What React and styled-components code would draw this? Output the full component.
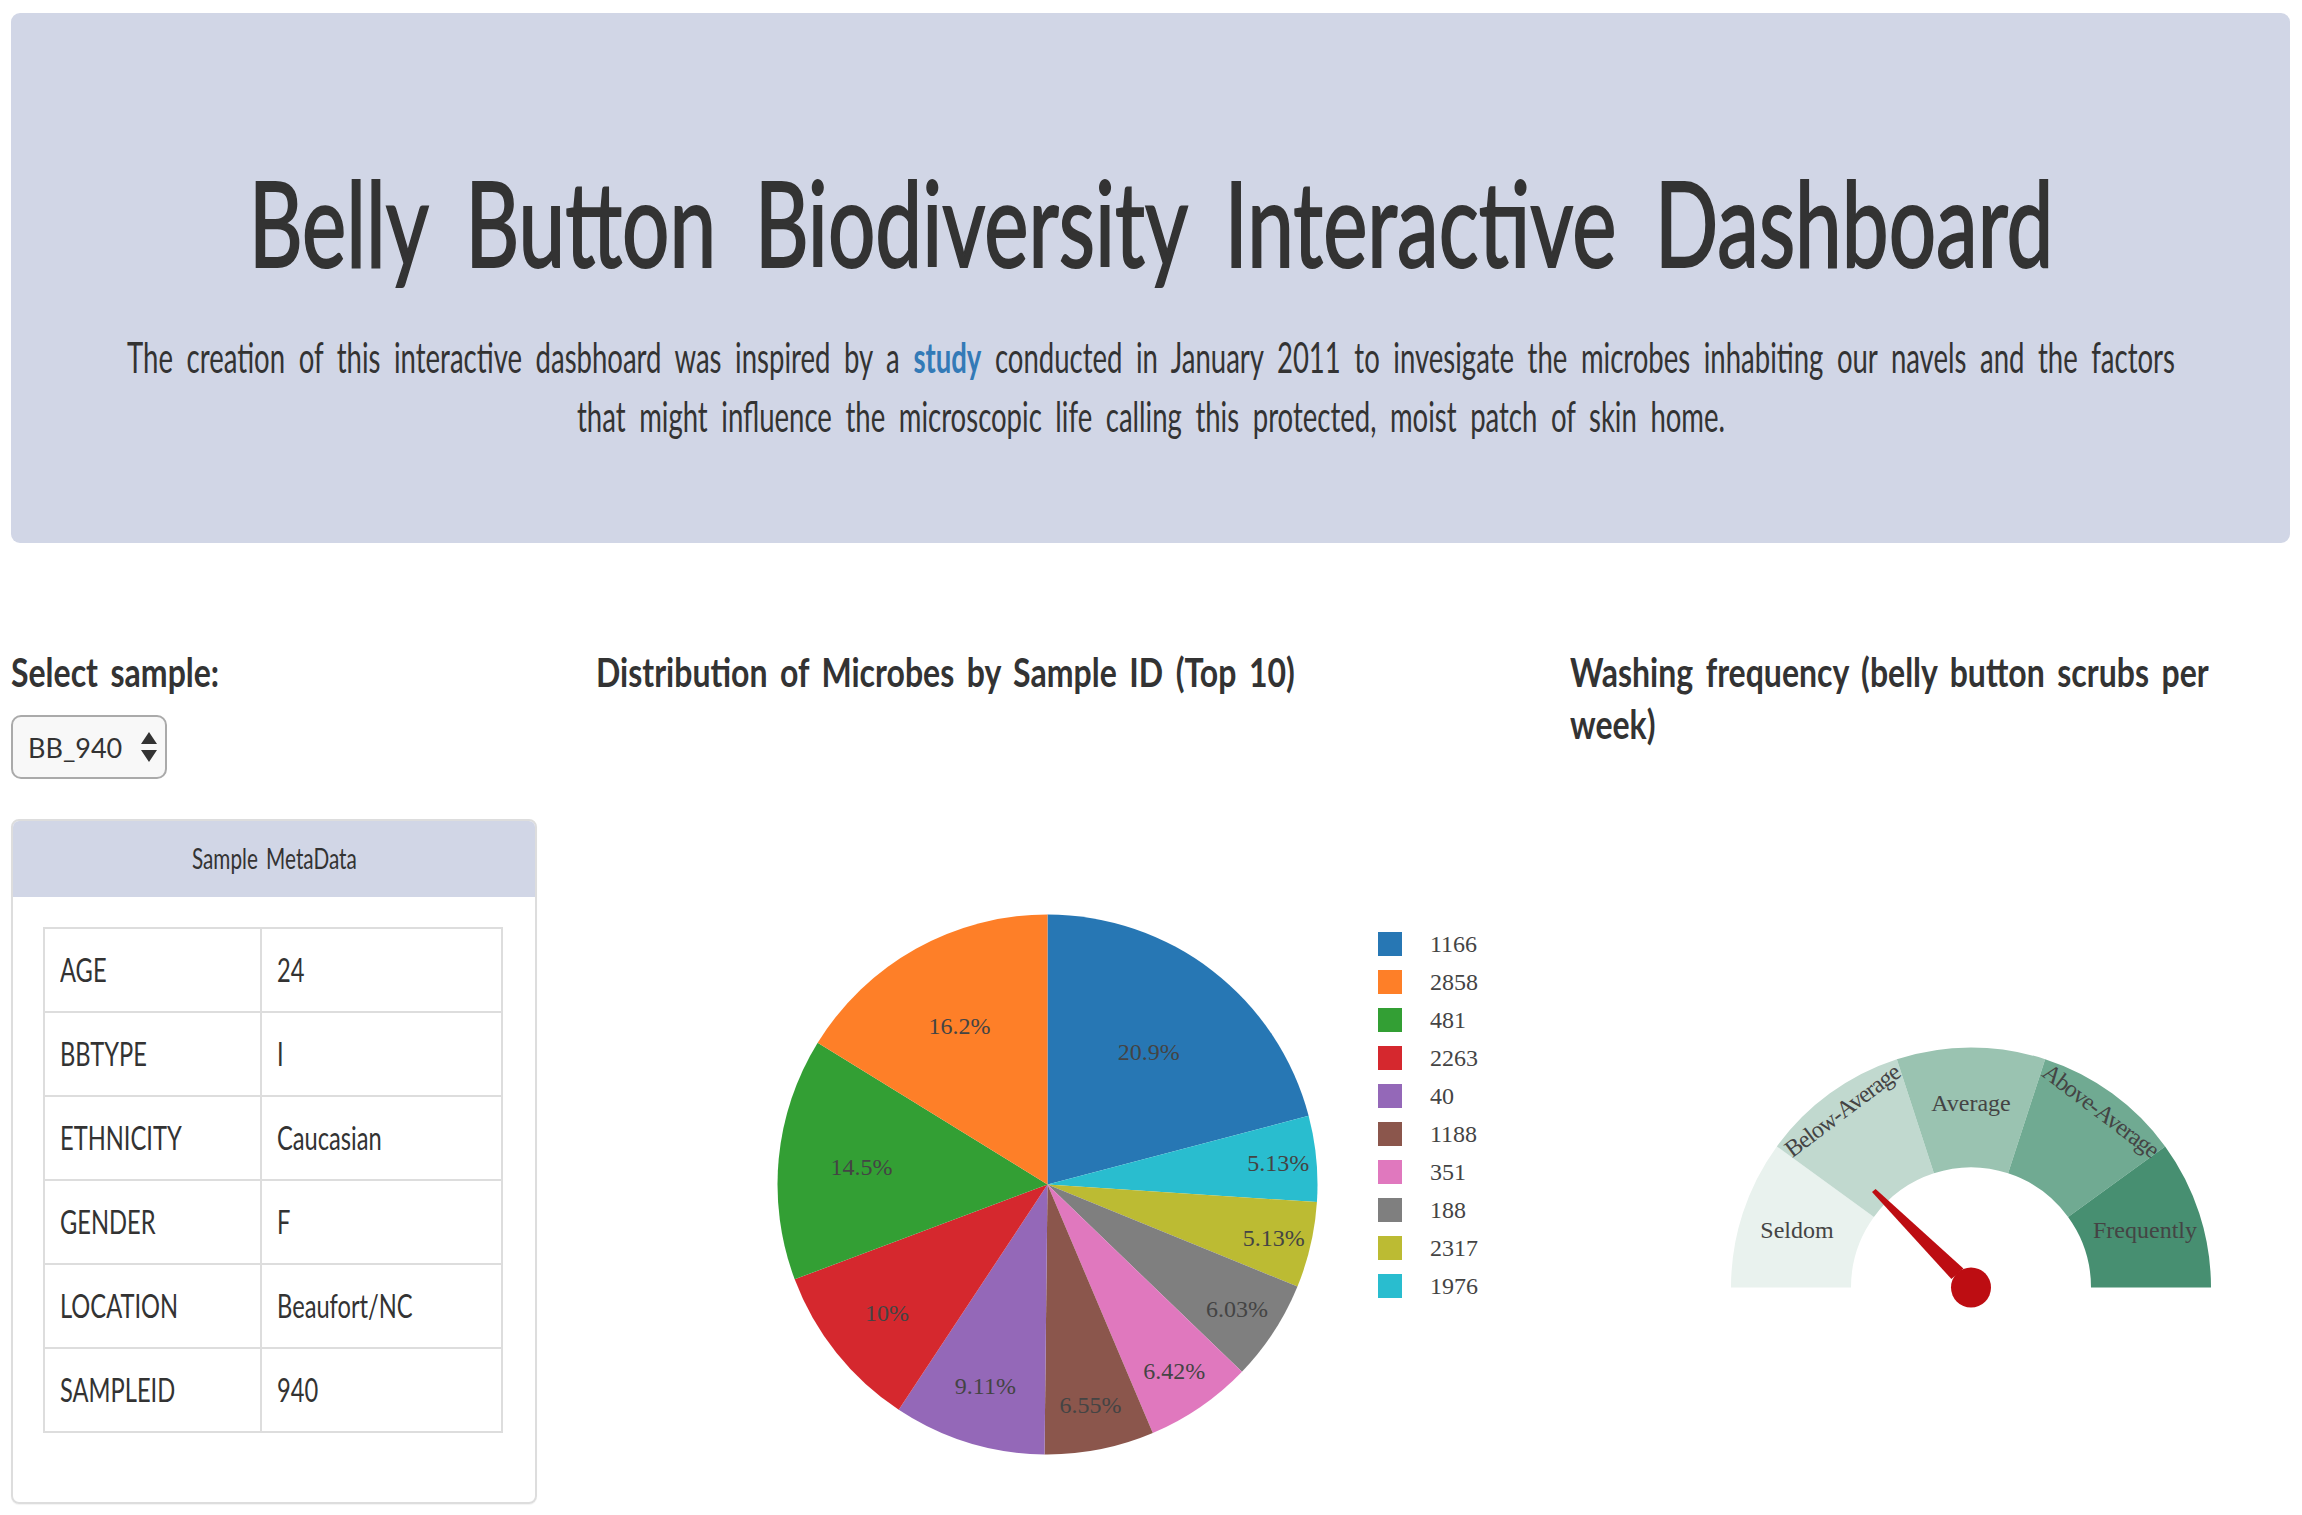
import React from 'react';
import styled, { createGlobalStyle } from 'styled-components';

const GlobalStyle = createGlobalStyle`
  html, body {
    margin: 0;
    background: #fff;
  }
  body {
    font-family: Lato, "Liberation Sans", sans-serif;
    color: #333;
  }
`;

const Page = styled.div`
  width: 2302px;
  height: 1515px;
  overflow: hidden;
  box-sizing: border-box;
  padding: 13px 12px 0 11px;
`;

const Jumbotron = styled.header`
  height: 530px;
  box-sizing: border-box;
  padding-top: 144px;
  background: #d1d6e6;
  border-radius: 9px;
  overflow: hidden;
`;

// the reference uses a tall, narrow hand-written face: squeeze a stock font to the same proportions
const Title = styled.h1`
  width: max-content;
  margin: 0 0 0 50%;
  font-size: 118px;
  font-weight: 400;
  line-height: 130px;
  word-spacing: 24px;
  white-space: nowrap;
  color: #333;
  -webkit-text-stroke: 2px #333;
  transform: translateX(-50%) scaleX(0.709);
`;

const Lead = styled.p`
  width: max-content;
  margin: 41px 0 0 50%;
  font-size: 42px;
  line-height: 59px;
  text-align: center;
  word-spacing: 10px;
  white-space: nowrap;
  color: #333;
  transform: translateX(-50%) scaleX(0.655);
`;

const StudyLink = styled.a`
  color: #337ab7;
  font-weight: 700;
  text-decoration: none;
`;

const Columns = styled.main`
  display: grid;
  grid-template-columns: 585px 974px 720px;
  margin-top: 103px;
`;

const Column = styled.section`
  min-width: 0;
`;

const SideTitle = styled.h3`
  width: max-content;
  margin: 0;
  font-size: 40px;
  font-weight: 700;
  line-height: 52px;
  word-spacing: 6px;
  color: #333;
  transform: scaleX(0.8);
  transform-origin: left center;
`;

const ChartTitle = styled(SideTitle)`
  min-height: 104px;
`;

const SelectWrap = styled.div`
  position: relative;
  width: 156px;
  height: 64px;
  margin-top: 17px;
`;

const SampleSelect = styled.select`
  appearance: none;
  width: 100%;
  height: 100%;
  box-sizing: border-box;
  padding: 0 0 0 15px;
  border: 2px solid #aaa;
  border-radius: 10px;
  background: #f8f8f8;
  font: 400 27px Lato, "Liberation Sans", sans-serif;
  color: #333;
`;

const SelectArrows = styled.svg`
  position: absolute;
  top: 16px;
  right: 10px;
  width: 16px;
  height: 32px;
  pointer-events: none;
`;

const Panel = styled.div`
  width: 526px;
  height: 685px;
  box-sizing: border-box;
  margin-top: 40px;
  border: 2px solid #ddd;
  border-radius: 8px;
  box-shadow: 0 1px 1px rgba(0, 0, 0, 0.05);
  overflow: hidden;
`;

const PanelHeading = styled.div`
  height: 76px;
  background: #d1d6e6;
  line-height: 74px;
  text-align: center;
`;

const HeadingText = styled.span`
  display: inline-block;
  font-size: 28px;
  word-spacing: 4px;
  color: #333;
  transform: scaleX(0.74);
`;

const PanelBody = styled.div`
  padding: 30px 30px;
`;

const MetaTable = styled.table`
  width: 460px;
  border-collapse: collapse;
  table-layout: fixed;
`;

const MetaRow = styled.tr`
  height: 84px;
`;

const MetaCell = styled.td`
  box-sizing: border-box;
  padding: 0 0 2px 15px;
  border: 2px solid #ddd;

  &:first-child {
    width: 217px;
  }
`;

const CellText = styled.span`
  display: inline-block;
  font-size: 32px;
  white-space: nowrap;
  color: #333;
  transform: scaleX(0.74);
  transform-origin: left center;
`;

const ChartCanvas = styled.svg`
  display: block;
  margin-top: 130px;
  font-family: "Liberation Serif", "Times New Roman", serif;
`;

const ChartLabel = styled.text`
  font-size: 24px;
  fill: #444;
  text-anchor: ${(props) => props.$anchor || 'middle'};
  letter-spacing: ${(props) => props.$tracking || 0}px;
`;

const PIE = { cx: 451.5, cy: 304.5, r: 270 };

// clockwise from 12 o'clock, same order plotly drew the slices
const slices = [
  { id: '1166', pct: 20.9, color: '#2777b4', label: '20.9%', x: 552.7, y: 180 },
  { id: '1976', pct: 5.13, color: '#29bdcf', label: '5.13%', x: 682.3, y: 291 },
  { id: '2317', pct: 5.13, color: '#bcbb33', label: '5.13%', x: 677.7, y: 366 },
  { id: '188', pct: 6.03, color: '#7f7f7f', label: '6.03%', x: 641, y: 437 },
  { id: '351', pct: 6.42, color: '#e078be', label: '6.42%', x: 578.2, y: 499 },
  { id: '1188', pct: 6.55, color: '#8b564c', label: '6.55%', x: 494.5, y: 533 },
  { id: '40', pct: 9.11, color: '#9468b8', label: '9.11%', x: 389.4, y: 514 },
  { id: '2263', pct: 10, color: '#d5282e', label: '10%', x: 291, y: 441 },
  { id: '481', pct: 14.5, color: '#339f34', label: '14.5%', x: 265.4, y: 295 },
  { id: '2858', pct: 16.2, color: '#fe7f28', label: '16.2%', x: 363.4, y: 154 },
];

const legendOrder = ['1166', '2858', '481', '2263', '40', '1188', '351', '188', '2317', '1976'];

const polar = (cx, cy, r, deg) => {
  const rad = (deg * Math.PI) / 180;
  return [cx + r * Math.sin(rad), cy - r * Math.cos(rad)];
};

const piePaths = () => {
  const total = slices.reduce((sum, s) => sum + s.pct, 0);
  let angle = 0;
  return slices.map((s) => {
    const start = polar(PIE.cx, PIE.cy, PIE.r, angle);
    angle += (s.pct / total) * 360;
    const end = polar(PIE.cx, PIE.cy, PIE.r, angle);
    const large = s.pct / total > 0.5 ? 1 : 0;
    return {
      ...s,
      d: `M${PIE.cx} ${PIE.cy}L${start[0]} ${start[1]}A${PIE.r} ${PIE.r} 0 ${large} 1 ${end[0]} ${end[1]}Z`,
    };
  });
};

const PieChart = () => (
  <ChartCanvas width="974" height="640" viewBox="0 0 974 640">
    {piePaths().map((s) => (
      <path key={s.id} d={s.d} fill={s.color} />
    ))}
    {slices.map((s) => (
      <ChartLabel key={s.id} x={s.x} y={s.y}>
        {s.label}
      </ChartLabel>
    ))}
    {legendOrder.map((id, i) => (
      <g key={id}>
        <rect x="782" y={52 + 38 * i} width="24" height="24" fill={slices.find((s) => s.id === id).color} />
        <ChartLabel $anchor="start" x="834" y={72 + 38 * i}>
          {id}
        </ChartLabel>
      </g>
    ))}
  </ChartCanvas>
);

const GAUGE = { cx: 401, cy: 407.5, outer: 240, inner: 120 };

const bands = [
  { color: '#e9f2ee', label: 'Seldom', x: 227, y: 358 },
  { color: '#c1d9cf', label: 'Below-Average', x: 277, y: 237, rotate: -37 },
  { color: '#9ac3b1', label: 'Average', x: 401, y: 231 },
  { color: '#70aa92', label: 'Above-Average', x: 526, y: 237, rotate: 37 },
  { color: '#478f71', label: 'Frequently', x: 575, y: 358 },
];

const bandPath = (i) => {
  const { cx, cy, outer, inner } = GAUGE;
  const from = -90 + i * 36;
  const to = from + 36;
  const a = polar(cx, cy, outer, from);
  const b = polar(cx, cy, outer, to);
  const c = polar(cx, cy, inner, to);
  const d = polar(cx, cy, inner, from);
  return `M${a[0]} ${a[1]}A${outer} ${outer} 0 0 1 ${b[0]} ${b[1]}L${c[0]} ${c[1]}A${inner} ${inner} 0 0 0 ${d[0]} ${d[1]}Z`;
};

const GaugeChart = () => (
  <ChartCanvas width="720" height="640" viewBox="0 0 720 640">
    {bands.map((b, i) => (
      <path key={b.label} d={bandPath(i)} fill={b.color} />
    ))}
    {bands.map((b) => (
      <ChartLabel
        key={b.label}
        x={b.x}
        y={b.y}
        $tracking={b.rotate ? -1 : 0}
        transform={b.rotate ? `rotate(${b.rotate} ${b.x} ${b.y})` : undefined}
      >
        {b.label}
      </ChartLabel>
    ))}
    <path d="M302 312L305.6 309L393.4 388.5L381.4 399Z" fill="#bd0d12" />
    <circle cx="401" cy="407.5" r="20" fill="#bd0d12" />
  </ChartCanvas>
);

const metadata = [
  ['AGE', '24'],
  ['BBTYPE', 'I'],
  ['ETHNICITY', 'Caucasian'],
  ['GENDER', 'F'],
  ['LOCATION', 'Beaufort/NC'],
  ['SAMPLEID', '940'],
];

const App = () => {
  return (
    <Page>
      <GlobalStyle />
      <Jumbotron>
        <Title>Belly Button Biodiversity Interactive Dashboard</Title>
        <Lead>
          The creation of this interactive dasbhoard was inspired by a <StudyLink href="#study">study</StudyLink>{' '}
          conducted in January 2011 to invesigate the microbes inhabiting our navels and the factors
          <br />
          that might influence the microscopic life calling this protected, moist patch of skin home.
        </Lead>
      </Jumbotron>
      <Columns>
        <Column>
          <SideTitle>Select sample:</SideTitle>
          <SelectWrap>
            <SampleSelect defaultValue="BB_940">
              <option>BB_940</option>
            </SampleSelect>
            <SelectArrows viewBox="0 0 16 32">
              <path d="M8 1L16 13H0Z M8 31L0 19H16Z" fill="#333" />
            </SelectArrows>
          </SelectWrap>
          <Panel>
            <PanelHeading>
              <HeadingText>Sample MetaData</HeadingText>
            </PanelHeading>
            <PanelBody>
              <MetaTable>
                <tbody>
                  {metadata.map(([key, value]) => (
                    <MetaRow key={key}>
                      <MetaCell>
                        <CellText>{key}</CellText>
                      </MetaCell>
                      <MetaCell>
                        <CellText>{value}</CellText>
                      </MetaCell>
                    </MetaRow>
                  ))}
                </tbody>
              </MetaTable>
            </PanelBody>
          </Panel>
        </Column>
        <Column>
          <ChartTitle>Distribution of Microbes by Sample ID (Top 10)</ChartTitle>
          <PieChart />
        </Column>
        <Column>
          <ChartTitle>
            Washing frequency (belly button scrubs per
            <br />
            week)
          </ChartTitle>
          <GaugeChart />
        </Column>
      </Columns>
    </Page>
  );
};

export default App;
